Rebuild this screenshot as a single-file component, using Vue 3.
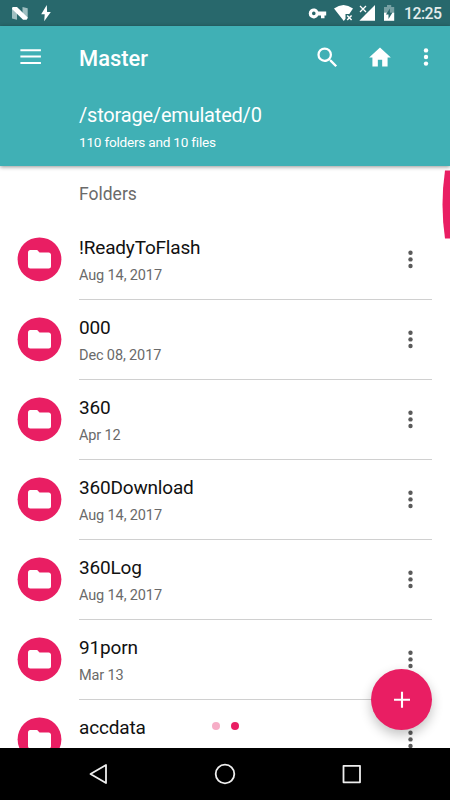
<script setup>
const folders = [
  { name: '!ReadyToFlash', date: 'Aug 14, 2017' },
  { name: '000', date: 'Dec 08, 2017' },
  { name: '360', date: 'Apr 12' },
  { name: '360Download', date: 'Aug 14, 2017' },
  { name: '360Log', date: 'Aug 14, 2017' },
  { name: '91porn', date: 'Mar 13' },
  { name: 'accdata', date: '' },
]
</script>

<template>
  <div class="screen">
    <div class="status">
      <svg class="notices" width="60" height="26" viewBox="0 0 60 26">
        <path d="M12 8.2L17 7v12.8L12 18.6zM22.5 7l5.2 1.2v10.4L22.5 19z" fill="#9fbfc1" />
        <path d="M12.500 7h4.500l10.700 10.500-1 2.300h-3.600L12 9z" fill="#fff" />
        <path d="M46.800 5L41.200 14.200h3.500L44.200 21.300 50.800 12h-3.700z" fill="#fff" />
      </svg>
      <div class="system">
        <svg width="92" height="26" viewBox="305 0 92 26">
          <path fill="#fff" fill-rule="evenodd" d="M318.300 11.400a5 5 0 1 0 0 4h2.700v2.800h3.500v-2.800h1.700v-4zM313.800 11.600a1.800 1.800 0 1 1 0 3.600a1.800 1.800 0 0 1 0-3.600z" />
          <path fill="#fff" d="M334 8.500Q343.500 1.500 353 8.500L349.300 13.900H345.500V18.800L343.800 20.900z" />
          <path stroke="#fff" stroke-width="1.500" d="M347.200 15.400l4.400 4.600m0-4.600l-4.400 4.600" />
          <path fill="#fff" d="M375 5v15.700h-15.700z" />
          <path stroke="#fff" stroke-width="1.300" d="M360 6l6 6m0-6l-6 6" />
          <path fill="#77a0a3" d="M384 7h3V5h4.200v2h3v6.500H384z" />
          <path fill="#fff" d="M384 12.700h10.200v8.100H384z" />
          <path fill="#28686c" d="M389.900 8.400l-4 6.200h2.600v4.300l4-6.300h-2.600z" />
        </svg>
        <span class="clock">12:25</span>
      </div>
    </div>

    <header class="header">
      <div class="toolbar">
        <svg class="menu" width="21" height="16" viewBox="0 0 21 16">
          <path fill="#fff" d="M.4 .2h20.500v2H.4zM.4 6.500h20.500v2H.4zM.4 12.900h20.500v2H.4z" />
        </svg>
        <h1>Master</h1>
        <svg class="search" width="27" height="27" viewBox="0 0 24 24">
          <path fill="#fff" d="M15.500 14h-.79l-.28-.27A6.470 6.470 0 0 0 16 9.500 6.500 6.500 0 1 0 9.500 16c1.610 0 3.090-.59 4.230-1.570l.27.28v.79l5 4.990L20.490 19zm-6 0a4.500 4.500 0 1 1 0-9 4.500 4.500 0 0 1 0 9z" />
        </svg>
        <svg class="home" width="26" height="27" viewBox="0 0 24 24" preserveAspectRatio="none">
          <path fill="#fff" d="M10 20v-6h4v6h5v-8h3L12 3 2 12h3v8z" />
        </svg>
        <svg class="more" width="6" height="20" viewBox="0 0 6 20">
          <g fill="#fff"><circle cx="3" cy="3.400" r="2.200" /><circle cx="3" cy="10" r="2.200" /><circle cx="3" cy="16.600" r="2.200" /></g>
        </svg>
      </div>
      <div class="path">/storage/emulated/0</div>
      <div class="summary">110 folders and 10 files</div>
    </header>

    <main class="content">
      <h2>Folders</h2>
      <ul>
        <li v-for="folder in folders" :key="folder.name">
          <svg class="avatar" width="46" height="46" viewBox="0 0 46 46">
            <circle cx="22.500" cy="22.300" r="21.900" fill="#e91e63" />
            <path transform="translate(8.700 8.500) scale(1.150)" fill="#fff" d="M10 4H4c-1.100 0-1.990.9-1.990 2L2 18c0 1.100.9 2 2 2h16c1.100 0 2-.9 2-2V8c0-1.100-.9-2-2-2h-8z" />
          </svg>
          <div class="entry">
            <div class="label">
              <div class="name">{{ folder.name }}</div>
              <div class="date">{{ folder.date }}</div>
            </div>
            <svg class="dots" width="6" height="20" viewBox="0 0 6 20">
              <g fill="#5b5b5b"><circle cx="3.500" cy="3.800" r="2.200" /><circle cx="3.500" cy="10.400" r="2.200" /><circle cx="3.500" cy="17" r="2.200" /></g>
            </svg>
          </div>
        </li>
      </ul>
      <svg class="thumb" width="8" height="69" viewBox="0 0 8 69">
        <path fill="#e91e63" d="M8 0.500H3Q-2 34.500 3 68.500H8z" />
      </svg>
      <div class="pager"><i class="faded"></i><i></i></div>
      <button class="fab" aria-label="Add">
        <svg width="17" height="17" viewBox="0 0 17 17"><path stroke="#fff" stroke-width="2.100" d="M9 .7v16M1 8.700h16" /></svg>
      </button>
    </main>

    <nav class="navbar">
      <svg width="22" height="24" viewBox="0 0 22 24"><path d="M19 3v18L3.500 12z" /></svg>
      <svg width="22" height="24" viewBox="0 0 22 24"><circle cx="11" cy="12" r="9.300" /></svg>
      <svg width="22" height="24" viewBox="0 0 22 24"><rect x="3.500" y="3.800" width="16.500" height="16.500" /></svg>
    </nav>
  </div>
</template>

<style>
body { margin: 0; overflow: hidden; }
</style>

<style scoped>
.screen { width: 450px; height: 800px; display: flex; flex-direction: column; overflow: hidden; background: #fff; font-family: Roboto, sans-serif; }
svg { display: block; flex: none; }
.status { height: 26px; flex: none; display: flex; justify-content: space-between; background: #28686c; }
.system { display: flex; width: 145px; }
.clock { margin-left: 7px; color: #e5eded; font-size: 15.800px; font-weight: 500; line-height: 28px; letter-spacing: -.5px; white-space: nowrap; }
.header { height: 140px; flex: none; background: #40b0b5; color: #fff; box-shadow: 0 1px 4px rgba(0, 0, 0, .42); z-index: 1; }
.toolbar { height: 62px; display: flex; align-items: center; padding: 0 21px 0 20px; }
h1 { margin: 0 auto 0 38px; font-size: 21.900px; font-weight: 500; line-height: 60px; padding-top: 3px; }
.search { margin-right: 26px; }
.home { margin-right: 30px; }
.path { height: 32px; margin: 11px 0 0 79px; font-size: 20px; line-height: 32px; letter-spacing: -.2px; }
.summary { margin-left: 79px; font-size: 13.600px; line-height: 22px; letter-spacing: -.22px; }
.content { flex: 1; min-height: 0; overflow: hidden; position: relative; }
h2 { margin: 0; height: 54px; padding-left: 79px; color: #6a6a6a; font-size: 17.500px; font-weight: 400; line-height: 56px; }
ul { margin: 0; padding: 0; list-style: none; }
li { height: 80px; display: flex; padding: 0 18px 0 17px; }
.avatar { margin-top: 17px; }
.entry { flex: 1; display: flex; justify-content: space-between; margin-left: 16px; box-sizing: border-box; border-bottom: 1px solid #d0d0d0; }
.label { padding-top: 14px; }
.name { color: #111; font-size: 19px; line-height: 28px; letter-spacing: -.18px; white-space: nowrap; }
.date { color: #6a6a6a; font-size: 14.500px; line-height: 28px; letter-spacing: -.13px; }
.dots { margin: 29px 19px 0 0; }
.thumb { position: absolute; right: 0; top: 4px; }
.pager { position: absolute; left: 212px; top: 556px; display: flex; gap: 11px; }
.pager i { width: 8px; height: 8px; border-radius: 50%; background: #e91e63; }
.pager .faded { background: #f6adc6; }
.fab { position: absolute; left: 371px; top: 503px; width: 61px; height: 61px; padding: 0; border: 0; border-radius: 50%; background: #e91e63; box-shadow: 0 5px 12px rgba(0, 0, 0, .24); display: flex; align-items: center; justify-content: center; }
.navbar { height: 52px; flex: none; background: #000; display: flex; justify-content: space-between; align-items: center; padding: 0 88px 0 87px; z-index: 1; }
.navbar svg { fill: none; stroke: #eee; stroke-width: 1.800; stroke-linejoin: round; }
</style>
